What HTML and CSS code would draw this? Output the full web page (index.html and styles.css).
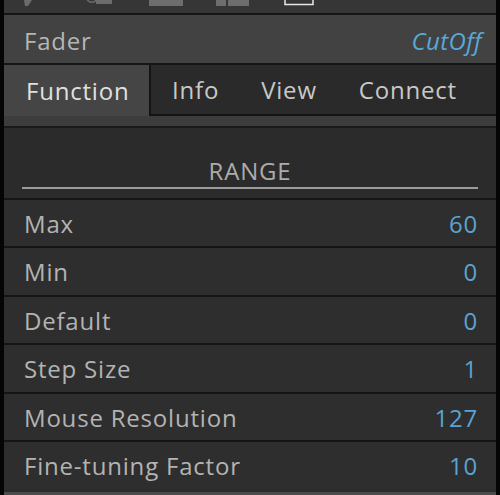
FILE: index.html
```html
<!DOCTYPE html>
<html>
<head>
<meta charset="utf-8">
<link rel="stylesheet" href="styles.css">
</head>
<body>
<div class="app">
  <div class="toolbar">
    <svg class="toolbar-icons" width="492" height="13" viewBox="0 0 492 13">
      <path d="M20 0 L28 0 L24 6 L21 6 Z" fill="#6c6c6c"/>
      <path d="M83 0 L86 2 L90 2 L92 0" stroke="#6c6c6c" stroke-width="1.5" fill="none"/>
      <rect x="92" y="0" width="16" height="4" fill="#6c6c6c"/>
      <rect x="145" y="0" width="34" height="6" fill="#6e6e6e"/>
      <rect x="212" y="0" width="10" height="6" fill="#6e6e6e"/>
      <rect x="224" y="0" width="21" height="6" fill="#6e6e6e"/>
      <path d="M281 0 L281 4.5 L309 4.5 L309 0" stroke="#e8e8e8" stroke-width="1.5" fill="none"/>
    </svg>
  </div>
  <div class="header">
    <span class="header-title">Fader</span>
    <span class="header-name">CutOff</span>
  </div>
  <div class="tabbar">
    <div class="tab tab-active">Function</div>
    <div class="tab-group">
      <div class="tab">Info</div>
      <div class="tab">View</div>
      <div class="tab">Connect</div>
    </div>
  </div>
  <div class="tab-strip"></div>
  <div class="panel">
    <div class="section">
      <div class="section-title">RANGE</div>
      <div class="section-rule"></div>
    </div>
    <div class="row"><span class="label">Max</span><span class="value">60</span></div>
    <div class="row"><span class="label">Min</span><span class="value">0</span></div>
    <div class="row"><span class="label">Default</span><span class="value">0</span></div>
    <div class="row"><span class="label">Step Size</span><span class="value">1</span></div>
    <div class="row"><span class="label">Mouse Resolution</span><span class="value">127</span></div>
    <div class="row"><span class="label">Fine-tuning Factor</span><span class="value">10</span></div>
  </div>
  <div class="bottom"></div>
</div>
</body>
</html>
```

FILE: styles.css
```css
html, body {
  margin: 0;
  padding: 0;
  background: #000;
}
.app {
  width: 500px;
  height: 495px;
  box-sizing: border-box;
  border-left: 4px solid #050505;
  border-right: 4px solid #050505;
  display: flex;
  flex-direction: column;
  font-family: "Open Sans", "Noto Sans", sans-serif;
  font-size: 24px;
  letter-spacing: 0.8px;
  overflow: hidden;
  background: #2b2b2b;
}
.toolbar {
  height: 13px;
  background: #363636;
  border-bottom: 2px solid #151515;
  flex: none;
}
.toolbar-icons {
  display: block;
}
.header {
  height: 49.5px;
  flex: none;
  box-sizing: border-box;
  background: #424242;
  border-bottom: 2px solid #151515;
  display: flex;
  align-items: center;
  justify-content: space-between;
  padding: 3px 14px 0 20px;
}
.header-title {
  color: #b5b5b5;
}
.header-name {
  color: #5aa8d8;
  font-style: italic;
  letter-spacing: 0.4px;
}
.tabbar {
  height: 51px;
  flex: none;
  display: flex;
  background: #454545;
}
.tab {
  color: #c8c8c8;
  display: flex;
  align-items: center;
}
.tab-active {
  width: 145px;
  box-sizing: border-box;
  padding-left: 22px;
  color: #e0e0e0;
}
.tab-group {
  flex: 1;
  display: flex;
  gap: 42px;
  padding-left: 21px;
  background: #2a2a2a;
  border-left: 2px solid #141414;
  border-bottom: 2px solid #141414;
}
.tab-strip {
  height: 10px;
  flex: none;
  background: #3d3d3d;
  border-bottom: 2px solid #1a1a1a;
}
.panel {
  flex: 1;
  display: flex;
  flex-direction: column;
  background: #2b2b2b;
}
.section {
  height: 70px;
  box-sizing: border-box;
  display: flex;
  flex-direction: column;
  align-items: center;
  padding: 29px 18px 0 18px;
}
.section-title {
  color: #acacac;
  line-height: 28px;
}
.section-rule {
  align-self: stretch;
  height: 2px;
  background: #9c9c9c;
  margin-top: 2px;
}
.row {
  height: 48.5px;
  box-sizing: border-box;
  border-top: 2px solid #151515;
  background: #2e2e2e;
  display: flex;
  align-items: center;
  justify-content: space-between;
  padding: 1px 18px 0 20px;
}
.label {
  color: #b3b3b3;
}
.value {
  color: #5aa3d3;
}
.bottom {
  height: 3.5px;
  flex: none;
  background: #4b4b4b;
}
```
